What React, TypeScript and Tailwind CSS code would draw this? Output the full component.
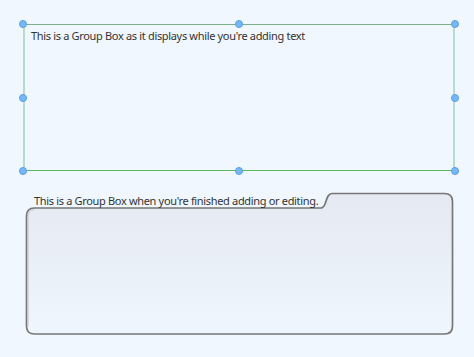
import React from "react";

const Handle = ({ cls }: { cls: string }) => (
  <div
    className={
      "absolute w-[8px] h-[8px] rounded-full bg-[#78b8f8] border border-[#559fe8] " + cls
    }
  />
);

export default function App() {
  return (
    <div
      className="w-[474px] h-[357px] bg-[#f0f7fe] pt-[24px] pl-[23px] overflow-hidden"
      style={{ fontFamily: '"Noto Sans", "Open Sans", sans-serif' }}
    >
      <div className="relative w-[432px] h-[147px]">
        <div className="w-full h-full border-l-2 border-r-2 border-t border-b border-l-[#b6dccb] border-r-[#b6dccb] border-t-[#7daf8b] border-b-[#5cb85c] pl-[6px] pt-[4px]">
          <p className="text-[11px] leading-[14px] tracking-[-0.33px] text-[#333]">
            This is a Group Box as it displays while you're adding text
          </p>
        </div>
        <Handle cls="left-[-4px] top-[-4px]" />
        <Handle cls="left-[212px] top-[-4px]" />
        <Handle cls="left-[428px] top-[-4px]" />
        <Handle cls="left-[-4px] top-[70px]" />
        <Handle cls="left-[428px] top-[70px]" />
        <Handle cls="left-[-4px] top-[143px]" />
        <Handle cls="left-[212px] top-[143px]" />
        <Handle cls="left-[428px] top-[143px]" />
      </div>

      <div className="relative ml-[2px] mt-[21px] w-[431px] h-[145px]">
        <svg
          className="absolute inset-0"
          width="431"
          height="145"
          viewBox="0 0 431 145"
        >
          <defs>
            <linearGradient id="gb" x1="0" y1="0" x2="0" y2="1">
              <stop offset="0" stopColor="#e4e9f2" />
              <stop offset="1" stopColor="#eff6fd" />
            </linearGradient>
          </defs>
          <path
            d="M 9.5 16 L 296 16 C 302 16, 300 1.5, 307 1.5 L 419.5 1.5 Q 427.5 1.5 427.5 9.5 L 427.5 134 Q 427.5 142 419.5 142 L 9.5 142 Q 1.5 142 1.5 134 L 1.5 24 Q 1.5 16 9.5 16 Z"
            fill="url(#gb)"
            stroke="#777"
            strokeWidth="1.7"
          />
          <path
            d="M 3.2 134 L 3.2 24 Q 3.2 17.8 9.5 17.8"
            fill="none"
            stroke="#c9cdd4"
            strokeWidth="1"
          />
        </svg>
        <p className="relative pl-[9px] pt-[2px] text-[11px] leading-[14px] tracking-[-0.33px] text-[#333]">
          This is a Group Box when you're finished adding or editing.
        </p>
      </div>
    </div>
  );
}
